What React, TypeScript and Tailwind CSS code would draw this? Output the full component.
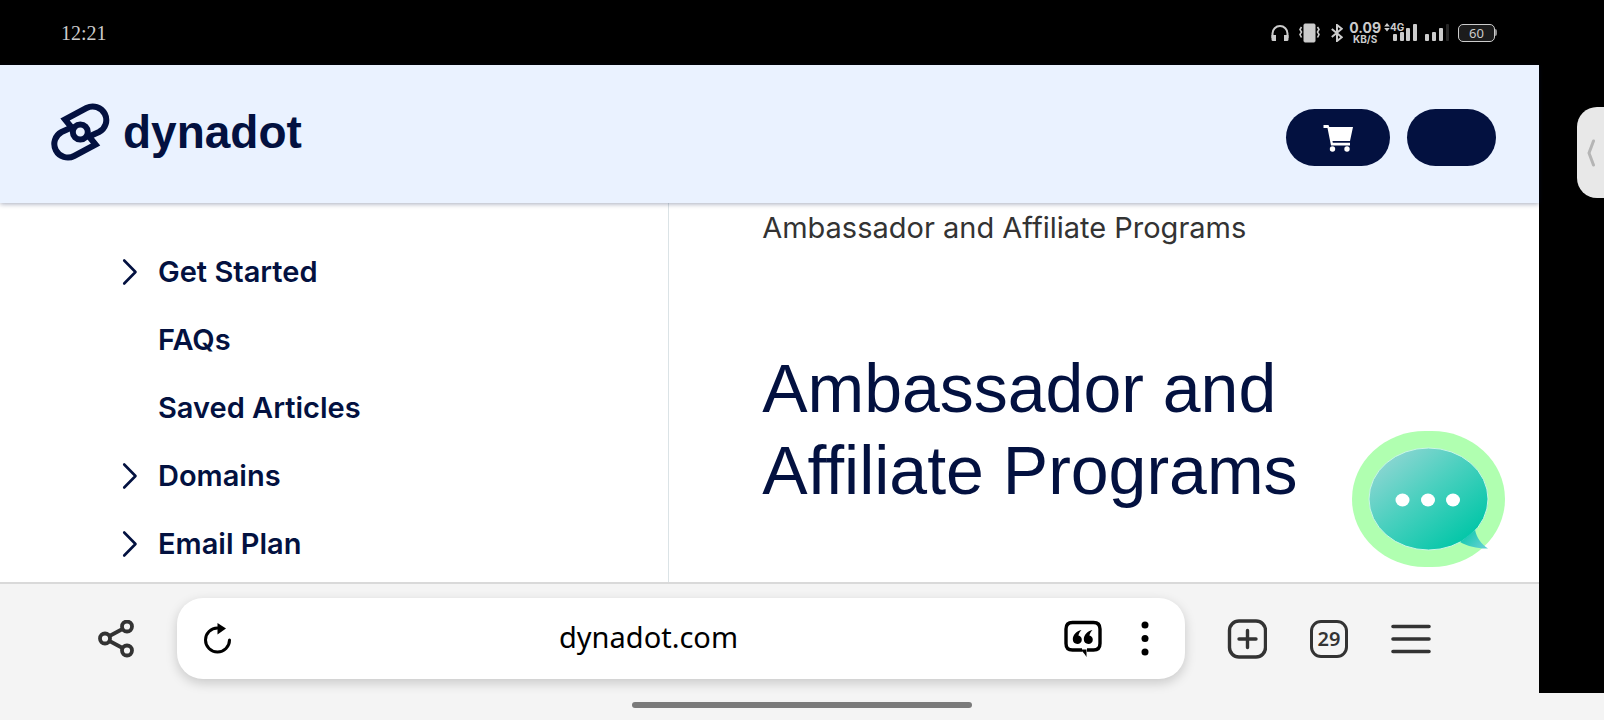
import type { ReactNode } from 'react'

interface NavItem {
  label: string
  expandable: boolean
}

const NAV: NavItem[] = [
  { label: 'Get Started', expandable: true },
  { label: 'FAQs', expandable: false },
  { label: 'Saved Articles', expandable: false },
  { label: 'Domains', expandable: true },
  { label: 'Email Plan', expandable: true },
]

function StatusBar() {
  return (
    <div className="flex h-[65px] items-center justify-between bg-black pl-[61px] pr-[42px] text-[#cccccc]">
      <time className="font-['Liberation_Serif',serif] text-[20px] leading-6">12:21</time>
      <div className="flex items-center">
        <svg className="mr-[10px] h-[18px] w-[18px]" viewBox="0 0 18 18" fill="none">
          <path d="M1.5 14V9.5a7.5 7.5 0 0 1 15 0V14" stroke="currentColor" strokeWidth="2" />
          <path d="M.5 11H5v6H2a1.500 1.500 0 0 1-1.500-1.500zM13 11h4.500v4.500A1.500 1.500 0 0 1 16 17h-3z" fill="currentColor" />
        </svg>
        <svg className="mr-[11px] h-5 w-[21px]" viewBox="0 0 21 20" fill="none" stroke="currentColor">
          <rect x="5" y="1" width="11" height="18" rx="1" fill="currentColor" />
          <path d="M2.500 4 1 6.500l1.500 2.500L1 11.500 2.500 14.500M18.500 4 20 6.500l-1.500 2.500 1.500 2.500-1.500 3" strokeWidth="1.600" />
        </svg>
        <svg className="mr-[6px] h-[18px] w-3" viewBox="0 0 12 18" fill="none" stroke="currentColor" strokeWidth="2">
          <path d="m.8 5 10 8.200L6 17V1l4.800 3.800L.8 13" />
        </svg>
        <div className="flex flex-col items-center font-['Inter',sans-serif] font-bold">
          <span className="text-[14px] leading-3">0.09</span>
          <span className="text-[10px] leading-[10px]">KB/S</span>
        </div>
        <svg className="ml-[3px] h-5 w-[6px] self-start" viewBox="0 0 6 20" fill="currentColor">
          <path d="M3 1 5.800 4.500H.2zM3 9.500.2 6h5.600z" />
        </svg>
        <div className="relative ml-[3px] h-[17px] w-6">
          <span className="absolute -left-[3px] -top-[3px] font-['Inter',sans-serif] text-[10px] font-bold leading-3">4G</span>
          <svg className="h-[17px] w-6" viewBox="0 0 24 17" fill="currentColor">
            <rect x="0" y="10" width="4" height="7" rx="1" />
            <rect x="7" y="8" width="4" height="9" rx="1" />
            <rect x="13" y="4" width="4" height="13" rx="1" />
            <rect x="20" y="0" width="4" height="17" rx="1" />
          </svg>
        </div>
        <svg className="ml-2 h-[17px] w-6" viewBox="0 0 24 17" fill="currentColor">
          <rect x="0" y="10" width="4" height="7" rx="1" />
          <rect x="7" y="8" width="4" height="9" rx="1" />
          <rect x="14" y="4" width="4" height="13" rx="1" />
          <rect x="21" y="0" width="3" height="17" rx="1" fill="#262626" />
        </svg>
        <div className="ml-[9px] flex items-center">
          <div className="flex h-[18px] w-[37px] items-center justify-center rounded-[5px] border border-[#cccccc] bg-[#1c1c1c] font-['Noto_Sans',sans-serif] text-[13px] leading-4">
            60
          </div>
          <div className="h-[7px] w-[2px] rounded-r-sm bg-[#8c8c8c]" />
        </div>
      </div>
    </div>
  )
}

function Header() {
  return (
    <header className="z-10 flex h-[138px] items-start justify-between bg-[#eaf2ff] pl-[51px] pr-[43px] shadow-[0_1px_5px_rgba(4,16,62,0.35)]">
      <a href="#home" className="mt-[38px] flex items-center gap-[13px] text-[#031140]">
        <svg className="h-[58px] w-[59px]" viewBox="0 0 59 58" fill="none" stroke="currentColor" strokeWidth="6" aria-hidden="true">
          <path d="M21 25 14 16.500 35.500 5A13.500 13.500 0 0 1 48 29L37 34" />
          <path d="M37.600 33 44.600 41.500 23.100 53A13.500 13.500 0 0 1 10.600 29L21.600 24" />
          <circle cx="29.300" cy="29" r="7.500" />
        </svg>
        <span className="font-['Liberation_Sans',sans-serif] text-[46px] font-bold leading-[52px]">dynadot</span>
      </a>
      <div className="mt-11 flex gap-[17px]">
        <button aria-label="Cart" className="flex h-[57px] w-[104px] items-center justify-center rounded-full bg-[#031140] text-white">
          <svg className="h-7 w-[30px]" viewBox="0 0 30 28" fill="currentColor">
            <path d="M.5 1H5.500l.8 2H30L27 17H9.500l.3 1.800H27v2.700H8L4.500 4h-4z" />
            <circle cx="9.500" cy="25" r="2.700" />
            <circle cx="24" cy="25" r="2.700" />
          </svg>
        </button>
        <button aria-label="Account" className="h-[57px] w-[89px] rounded-full bg-[#031140]" />
      </div>
    </header>
  )
}

function Sidebar() {
  return (
    <nav className="border-r border-[#dbe3e6] pb-1 pl-[122px] pt-[35px]">
      {NAV.map(item => (
        <a key={item.label} href="#help" className="flex h-[68px] items-center gap-5 text-[#031140]">
          <svg className="h-7 w-4" viewBox="0 0 16 28" fill="none" aria-hidden="true">
            {item.expandable && <path d="M2.200 2.500 13.500 14 2.200 25.500" stroke="currentColor" strokeWidth="2.600" strokeLinecap="round" strokeLinejoin="round" />}
          </svg>
          <span className="font-['Inter',sans-serif] text-[29px] font-semibold leading-10">{item.label}</span>
        </a>
      ))}
    </nav>
  )
}

function ChatButton() {
  return (
    <button aria-label="Open chat" className="absolute bottom-[15px] right-[34px]">
      <svg className="h-[136px] w-[153px]" viewBox="0 0 153 136">
        <defs>
          <linearGradient id="bubble" x1="0.100" y1="0.100" x2="0.850" y2="0.900">
            <stop offset="0" stopColor="#8fd6d3" />
            <stop offset="0.450" stopColor="#4bd0bf" />
            <stop offset="1" stopColor="#00c6a7" />
          </linearGradient>
          <linearGradient id="tail" x1="0" y1="0" x2="1" y2="0.600">
            <stop offset="0" stopColor="#00c6a7" />
            <stop offset="1" stopColor="#5fd0d0" />
          </linearGradient>
        </defs>
        <rect width="153" height="136" rx="73" ry="68" fill="#b0ffb0" />
        <ellipse cx="76.500" cy="68" rx="59.500" ry="51" fill="url(#bubble)" stroke="#c9f7e6" />
        <path d="M123 99c2 8 6 14 13 18.500-9 .5-20-2-28-6.500z" fill="url(#tail)" />
        <g fill="#ffffff">
          <ellipse cx="50.500" cy="69" rx="7" ry="6.500" />
          <ellipse cx="76" cy="69" rx="7" ry="6.500" />
          <ellipse cx="101" cy="69" rx="7" ry="6.500" />
        </g>
      </svg>
    </button>
  )
}

function ToolButton({ label, children }: { label: string; children: ReactNode }) {
  return (
    <button aria-label={label} className="flex h-10 w-10 shrink-0 items-center justify-center text-[#333333]">
      {children}
    </button>
  )
}

function BrowserBar() {
  return (
    <div className="flex items-center gap-[42px] border-t-2 border-[#d9d9d9] bg-[#f4f4f4] pb-[14px] pl-[95px] pr-[108px] pt-[14px]">
      <ToolButton label="Share">
        <svg className="h-[38px] w-[37px]" viewBox="0 0 37 38" fill="none" stroke="currentColor" strokeWidth="3.800">
          <circle cx="8" cy="18.500" r="5" />
          <circle cx="30" cy="6.500" r="5" />
          <circle cx="30" cy="30.500" r="5" />
          <path d="M12.500 16 25.500 9M12.500 21l13 7" />
        </svg>
      </ToolButton>
      <div className="flex h-[81px] flex-1 items-center rounded-[26px] bg-white pl-[26px] pr-[30px] shadow-[0_4px_12px_rgba(0,0,0,0.18)]">
        <button aria-label="Reload">
          <svg className="h-8 w-[30px]" viewBox="0 0 30 32" fill="none">
            <path d="M14.500 5a12 12 0 1 0 12 12" stroke="#000000" strokeWidth="3" strokeLinecap="round" />
            <path d="M14.500 0 23 5.500l-8.500 6z" fill="#000000" />
          </svg>
        </button>
        <input
          aria-label="Address"
          defaultValue="dynadot.com"
          className="min-w-0 flex-1 bg-transparent pb-1 text-center font-['Noto_Sans',sans-serif] text-[29px] leading-10 text-black outline-none"
        />
        <button aria-label="Reader comments">
          <svg className="h-10 w-[38px]" viewBox="0 0 38 40" fill="none">
            <path d="M18 31H8.500Q2 31 2 24.500V10Q2 3.500 8.500 3.500h21Q36 3.500 36 10v14.500Q36 31 29.500 31H23" stroke="#000000" strokeWidth="3.400" />
            <path d="M14.500 30.500c4 1 5.500 3.500 8 7.500v-7.500z" fill="#000000" />
            <path d="M17.500 11c-5.200 1-8.700 5-8.700 9.300 0 2.800 1.900 4.700 4.500 4.700s4.500-1.800 4.500-4.300c0-2.200-1.400-3.700-3.400-4.100.5-2.200 1.500-4 3.100-5.600zM28.500 11c-5.200 1-8.700 5-8.700 9.300 0 2.800 1.900 4.700 4.500 4.700s4.500-1.800 4.500-4.300c0-2.200-1.400-3.700-3.400-4.100.5-2.200 1.500-4 3.100-5.600z" fill="#000000" />
          </svg>
        </button>
        <button aria-label="More options" className="ml-[33px]">
          <svg className="h-10 w-5" viewBox="0 0 20 40" fill="#000000">
            <circle cx="10" cy="6" r="3.500" />
            <circle cx="10" cy="19.500" r="3.500" />
            <circle cx="10" cy="33" r="3.500" />
          </svg>
        </button>
      </div>
      <ToolButton label="New tab">
        <svg className="h-10 w-10" viewBox="0 0 40 40" fill="none" stroke="currentColor" strokeWidth="3.400">
          <rect x="2.500" y="2" width="36" height="36" rx="9.500" />
          <path d="M20.500 11.500v17M12 20h17" strokeLinecap="round" />
        </svg>
      </ToolButton>
      <ToolButton label="Tabs">
        <span className="flex h-[38px] w-[38px] items-center justify-center rounded-[11px] border-3 border-[#333333] font-['Noto_Sans',sans-serif] text-[20px] font-semibold leading-6">
          29
        </span>
      </ToolButton>
      <ToolButton label="Menu">
        <svg className="h-10 w-10" viewBox="0 0 40 40" stroke="currentColor" strokeWidth="3.600" strokeLinecap="round">
          <path d="M2 7.500h36M2 20h36M2 32.500h36" />
        </svg>
      </ToolButton>
    </div>
  )
}

export default function App() {
  return (
    <div className="flex min-h-screen flex-col bg-[#f4f4f4]">
      <div className="flex flex-1">
        <div className="flex min-w-0 flex-1 flex-col">
          <StatusBar />
          <Header />
          <div className="relative grid flex-1 grid-cols-[10fr_13fr] bg-white">
            <Sidebar />
            <main className="pl-[93px] pt-[5px]">
              <p className="font-['Inter',sans-serif] text-[29px] leading-10 text-[#333333]">Ambassador and Affiliate Programs</p>
              <h1 className="mt-[99px] max-w-[560px] font-['Liberation_Sans',sans-serif] text-[68px] leading-[82px] text-[#031140]">
                Ambassador and Affiliate Programs
              </h1>
            </main>
            <ChatButton />
          </div>
          <BrowserBar />
        </div>

        {/* display cutout with the edge panel handle */}
        <aside className="flex w-[65px] flex-col items-end bg-black pt-[107px]">
          <button aria-label="Edge panel" className="flex h-[91px] w-[27px] items-center justify-center rounded-l-[20px] bg-[#e8e8e8]">
            <svg className="h-7 w-2" viewBox="0 0 8 28" fill="none">
              <path d="M6.500 2 2 14l4.500 12" stroke="#b5b5b5" strokeWidth="3" strokeLinecap="round" strokeLinejoin="round" />
            </svg>
          </button>
        </aside>
      </div>

      <div className="flex h-[27px] items-start justify-center pt-[9px]">
        <div className="h-[6px] w-[340px] rounded-full bg-[#7a7a7a]" />
      </div>
    </div>
  )
}
